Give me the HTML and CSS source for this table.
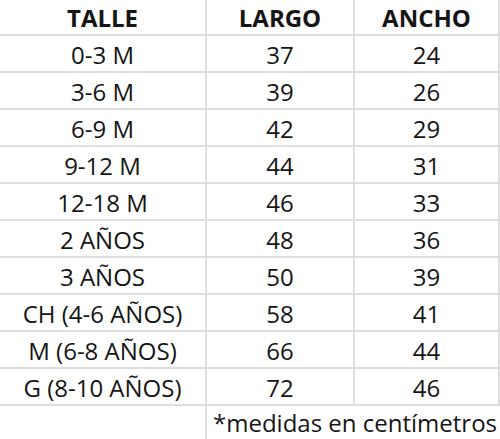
FILE: index.html
```html
<!DOCTYPE html>
<html lang="es">
<head>
<meta charset="utf-8">
<title>Tabla de talles</title>
<link rel="stylesheet" href="styles.css">
</head>
<body>
<div class="sheet">
  <div class="cell head">TALLE</div>
  <div class="cell head">LARGO</div>
  <div class="cell head">ANCHO</div>

  <div class="cell">0-3 M</div><div class="cell">37</div><div class="cell">24</div>
  <div class="cell">3-6 M</div><div class="cell">39</div><div class="cell">26</div>
  <div class="cell">6-9 M</div><div class="cell">42</div><div class="cell">29</div>
  <div class="cell">9-12 M</div><div class="cell">44</div><div class="cell">31</div>
  <div class="cell">12-18 M</div><div class="cell">46</div><div class="cell">33</div>
  <div class="cell">2 AÑOS</div><div class="cell">48</div><div class="cell">36</div>
  <div class="cell">3 AÑOS</div><div class="cell">50</div><div class="cell">39</div>
  <div class="cell">CH (4-6 AÑOS)</div><div class="cell">58</div><div class="cell">41</div>
  <div class="cell">M (6-8 AÑOS)</div><div class="cell">66</div><div class="cell">44</div>
  <div class="cell">G (8-10 AÑOS)</div><div class="cell">72</div><div class="cell">46</div>

  <div class="cell foot-empty"></div>
  <div class="cell note">*medidas en centímetros</div>
</div>
</body>
</html>
```
FILE: styles.css
```css
html, body {
  margin: 0;
  padding: 0;
  background: #ffffff;
}

body {
  width: 500px;
  height: 439px;
  overflow: hidden;
  font-family: "Open Sans", "Liberation Sans", sans-serif;
  color: #151515;
}

.sheet {
  display: grid;
  grid-template-columns: 207px 148px 145px;
  grid-template-rows: 36px repeat(10, 37px) 33px;
}

.cell {
  box-sizing: border-box;
  border-right: 2px solid #dedede;
  border-bottom: 2px solid #dedede;
  font-size: 24px;
  line-height: 33px;
  padding-top: 2px;
  text-align: center;
  white-space: nowrap;
}

.head {
  font-weight: 700;
  padding-top: 1px;
}

.foot-empty {
  border-bottom: none;
}

.note {
  grid-column: 2 / span 2;
  border-right: none;
  border-bottom: none;
  text-align: left;
  padding-left: 6px;
  padding-top: 0;
}
```
